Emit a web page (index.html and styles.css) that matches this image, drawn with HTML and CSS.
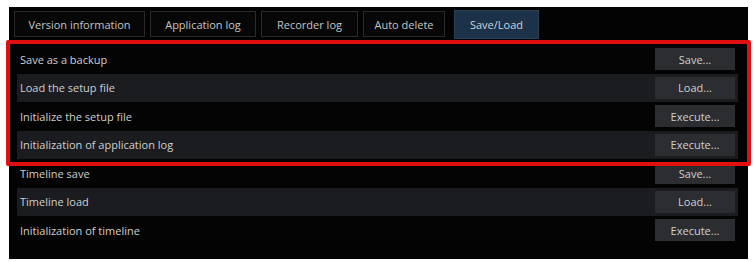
FILE: index.html
```html
<!DOCTYPE html>
<html>
<head>
<meta charset="utf-8">
<link rel="stylesheet" href="styles.css">
</head>
<body>
<div class="panel">
  <div class="tabs">
    <div class="tab t1">Version information</div>
    <div class="tab t2">Application log</div>
    <div class="tab t3">Recorder log</div>
    <div class="tab t4">Auto delete</div>
    <div class="tab active">Save/Load</div>
  </div>
  <div class="rows">
    <div class="row"><span>Save as a backup</span><button class="btn">Save...</button></div>
    <div class="row alt"><span>Load the setup file</span><button class="btn">Load...</button></div>
    <div class="row"><span>Initialize the setup file</span><button class="btn">Execute...</button></div>
    <div class="row alt"><span>Initialization of application log</span><button class="btn">Execute...</button></div>
    <div class="row"><span>Timeline save</span><button class="btn">Save...</button></div>
    <div class="row alt"><span>Timeline load</span><button class="btn">Load...</button></div>
    <div class="row"><span>Initialization of timeline</span><button class="btn">Execute...</button></div>
  </div>
</div>
<div class="highlight"></div>
</body>
</html>
```
FILE: styles.css
```css
html, body {
  margin: 0;
  padding: 0;
  background: #ffffff;
  width: 754px;
  height: 262px;
  overflow: hidden;
  font-family: "Open Sans", "Noto Sans", "DejaVu Sans", sans-serif;
}
.panel {
  position: relative;
  margin: 7px 0 0 9px;
  width: 739px;
  height: 252px;
  background: #030303;
  box-sizing: border-box;
  padding-top: 3px;
}
.tabs {
  display: flex;
  align-items: flex-start;
  padding-left: 5px;
  gap: 5px;
  height: 32px;
}
.tab {
  height: 26px;
  box-sizing: border-box;
  border: 1px solid #2a2a2a;
  background: #070707;
  color: #c4c4c4;
  font-size: 11px;
  display: flex;
  align-items: center;
  justify-content: center;
  margin-top: 1px;
}
.t1 { width: 131px; }
.t2 { width: 106px; }
.t3 { width: 97px; }
.t4 { width: 82px; margin-right: 4px; }
.tab.active {
  width: 85px;
  height: 29px;
  margin-top: 0;
  background: #1c3249;
  border-color: #2c4157;
  color: #c9d3dc;
}
.rows {
  margin: 3px 10px 0 8px;
  display: flex;
  flex-direction: column;
}
.row {
  height: 28.5px;
  display: flex;
  align-items: center;
  justify-content: space-between;
  padding-left: 3px;
  padding-right: 3px;
  background: #040404;
  color: #cfcfcf;
  font-size: 11px;
}
.row.alt {
  background: #1b1c1f;
}
.btn {
  width: 80px;
  height: 22px;
  border: none;
  background: #2b2d31;
  color: #cfcfcf;
  font-family: inherit;
  font-size: 11px;
  padding: 0;
}
.highlight {
  position: absolute;
  left: 6px;
  top: 40px;
  width: 745px;
  height: 126px;
  box-sizing: border-box;
  border: 4px solid #e01010;
  border-radius: 2px;
}
```
